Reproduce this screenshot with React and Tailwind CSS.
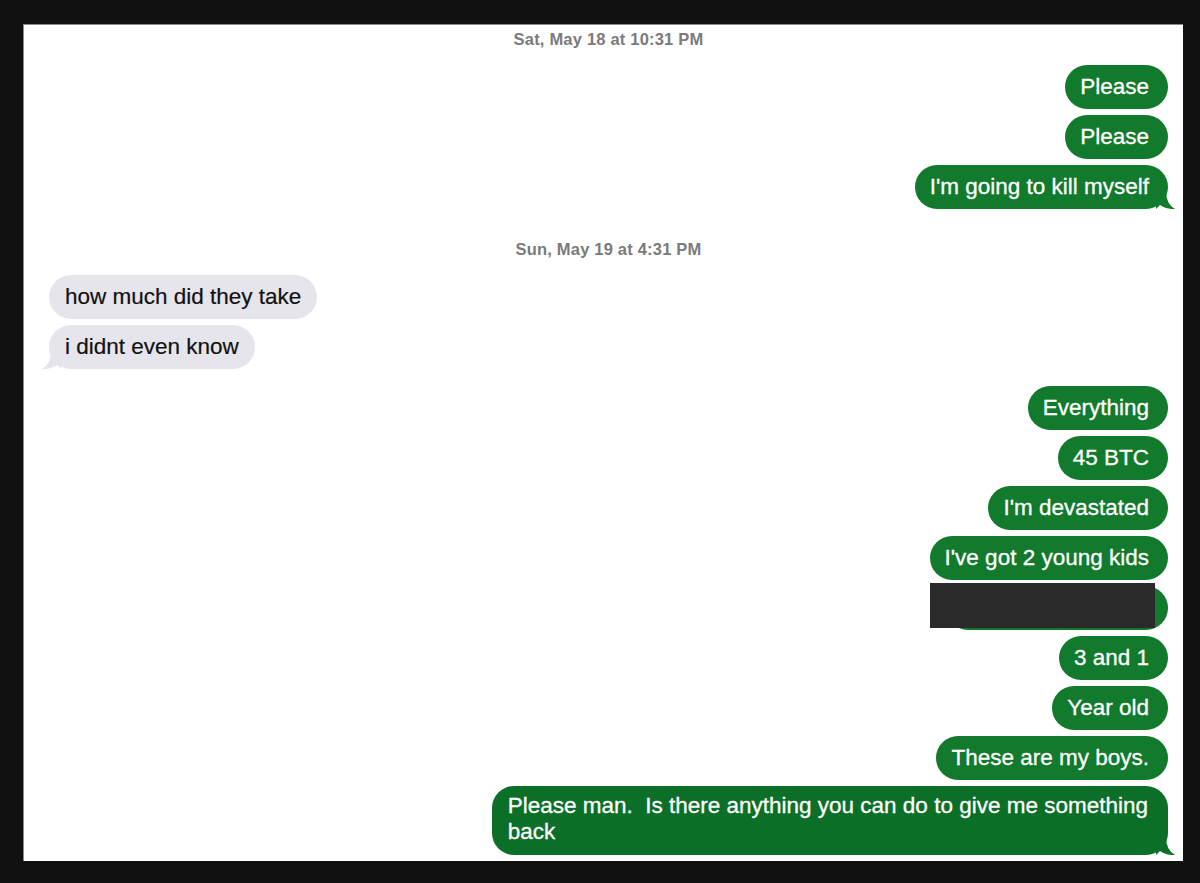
import React from "react";

const GREEN = "#117a2c";

function TailRight({ color }) {
  return (
    <svg className="absolute bottom-0 right-[-8px]" width="20" height="18" viewBox="0 0 20 18">
      <path d="M0 0 H10 Q10 13 19 18 Q10 18.5 4 14 Q2 16 0 18 Z" fill={color} />
    </svg>
  );
}

function TailLeft({ color }) {
  return (
    <svg className="absolute bottom-0 left-[-8px]" width="20" height="18" viewBox="0 0 20 18">
      <path d="M20 0 H10 Q10 13 1 18 Q10 18.5 16 14 Q18 16 20 18 Z" fill={color} />
    </svg>
  );
}

function Out({ children, tail }) {
  return (
    <div className="flex justify-end">
      <div className="relative h-[44px] rounded-[22px] bg-[#117a2c] text-white flex items-center pl-[15px] pr-[19px] text-[22.5px] leading-none whitespace-nowrap [-webkit-text-stroke:0.3px_white]">
        <span className="relative z-10">{children}</span>
        {tail && <TailRight color={GREEN} />}
      </div>
    </div>
  );
}

function In({ children, tail }) {
  return (
    <div className="flex justify-start">
      <div className="relative h-[44px] rounded-[22px] bg-[#e6e5eb] text-[#111] flex items-center px-4 text-[22.5px] leading-none whitespace-nowrap [-webkit-text-stroke:0.2px_#111]">
        <span className="relative z-10">{children}</span>
        {tail && <TailLeft color="#e6e5eb" />}
      </div>
    </div>
  );
}

function Stamp({ children }) {
  return (
    <div className="h-[20px] flex items-center justify-center text-[16.5px] font-semibold text-[#7b7b7b] tracking-[0.2px]">
      {children}
    </div>
  );
}

export default function App() {
  return (
    <div
      className="w-[1200px] h-[883px] bg-[#111111] pt-[24px] pl-[23px]"
      style={{ fontFamily: '"Liberation Sans", Arial, sans-serif' }}
    >
      <div className="w-[1160px] h-[837px] bg-white border-l border-t border-[#8a8a8a] overflow-hidden flex flex-col pl-[25px] pr-[15px] pt-[4px]">
        <Stamp>Sat, May 18 at 10:31 PM</Stamp>
        <div className="mt-[16px] flex flex-col gap-[6px]">
          <Out>Please</Out>
          <Out>Please</Out>
          <Out tail>I'm going to kill myself</Out>
        </div>
        <div className="mt-[30px]">
          <Stamp>Sun, May 19 at 4:31 PM</Stamp>
        </div>
        <div className="mt-[16px] flex flex-col gap-[6px]">
          <In>how much did they take</In>
          <In tail>i didnt even know</In>
        </div>
        <div className="mt-[17px] flex flex-col gap-[6px]">
          <Out>Everything</Out>
          <Out>45 BTC</Out>
          <Out>I'm devastated</Out>
          <Out>I've got 2 young kids</Out>
          <div className="flex justify-end">
            <div className="relative h-[44px] w-[222px] rounded-[22px] bg-[#117a2c]">
              <div className="absolute left-[-16px] top-[-3px] w-[225px] h-[45px] bg-[#2a2a2a]" />
            </div>
          </div>
          <Out>3 and 1</Out>
          <Out>Year old</Out>
          <Out>These are my boys.</Out>
          <div className="flex justify-end">
            <div className="relative rounded-[22px] bg-[#0b6f27] text-white pl-4 pr-5 pt-[7px] pb-[10px] text-[22.5px] leading-[26px] [-webkit-text-stroke:0.3px_white]">
              <span className="relative z-10 whitespace-nowrap">
                Please man.&nbsp; Is there anything you can do to give me something
                <br />
                back
              </span>
              <TailRight color="#0b6f27" />
            </div>
          </div>
        </div>
      </div>
    </div>
  );
}
